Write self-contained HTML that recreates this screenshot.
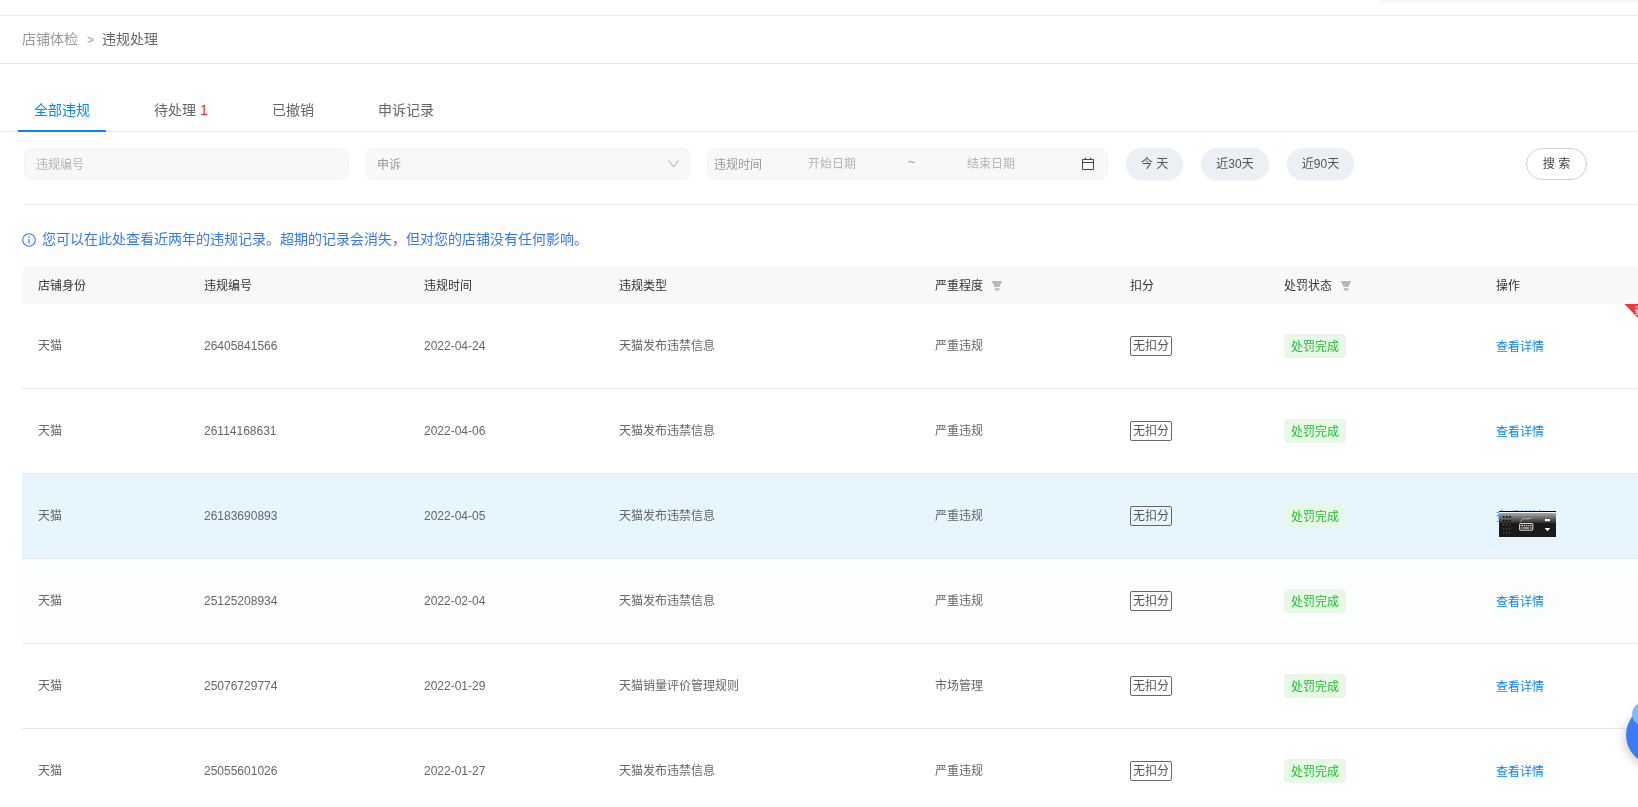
<!DOCTYPE html>
<html lang="zh-CN">
<head>
<meta charset="utf-8">
<title>违规处理</title>
<style>
*{box-sizing:border-box;margin:0;padding:0}
html,body{width:1638px;height:807px;overflow:hidden;background:#fff}
body{position:relative;font-family:"Liberation Sans","Noto Sans CJK SC",sans-serif;font-size:12px;color:#666;-webkit-font-smoothing:antialiased;will-change:transform}
.abs{position:absolute}
.hl{position:absolute;height:1px;background:#ebebeb}
.t{position:absolute;white-space:nowrap;line-height:20px;height:20px}
/* top */
#topchip{left:1376px;top:-10px;width:300px;height:13px;background:#f7f8fa;border-radius:10px}
/* breadcrumb */
.bc{font-size:14px;top:29px}
/* tabs */
.tab{font-size:14px;top:100px;color:#666}
#tabline{left:18px;top:130px;width:88px;height:2px;background:#0984ff}
/* filters */
.fbox{position:absolute;top:148px;height:32px;background:#f7f8fa;border:1px solid #f2f3f6;border-radius:9px}
.ph{position:absolute;top:6px;line-height:20px;font-size:12px;color:#b3b3b3;white-space:nowrap}
.pill{position:absolute;top:148px;height:32px;border-radius:16px;background:#ebf0f5;box-shadow:0 1px 2px rgba(0,0,0,.04);color:#555;font-size:12px;line-height:32px;text-align:center;white-space:nowrap}
#search{background:#fff;box-shadow:none;border:1px solid #d2d2d2;line-height:30px;color:#444}
/* info */
#info{left:42px;top:229px;font-size:14px;color:#3377ff}
/* table */
#thead{left:22px;top:266px;width:1616px;height:38px;background:#f7f8fa;border-radius:8px 0 0 0}
.th{top:276px;color:#333}
.row{position:absolute;left:22px;width:1616px;height:85px;border-bottom:1px solid #e8e8e8}
.row.sel{background:#e6f5fe}
.c{position:absolute;top:32px;line-height:20px;height:20px;white-space:nowrap;color:#666}
.c1{left:16px}.c2{left:182px}.c3{left:402px}.c4{left:597px}.c5{left:913px}
.tag1{position:absolute;left:1108px;top:32px;width:42px;height:20px;border:1px solid #666;border-radius:2px;line-height:19px;text-align:center;color:#555}
.tag2{position:absolute;left:1262px;top:30px;width:62px;height:24px;border-radius:4px;background:#e7f8e6;line-height:24px;padding-top:1px;text-align:center;color:#22bf30}
.lnk{position:absolute;left:1474px;top:33px;line-height:20px;color:#0984ff;white-space:nowrap}
</style>
</head>
<body>
<div class="abs" id="topchip"></div>
<div class="hl" style="left:0;top:15px;width:1638px"></div>
<div class="t bc" style="left:22px;color:#999">店铺体检</div>
<div class="t bc" style="left:87px;top:30px;color:#999;font-size:12px">&gt;</div>
<div class="t bc" style="left:102px;color:#666">违规处理</div>
<div class="hl" style="left:0;top:63px;width:1638px;background:#e8e8ec"></div>

<div class="t tab" style="left:34px;color:#0984ff">全部违规</div>
<div class="t tab" style="left:154px">待处理 <span style="color:#f5222d">1</span></div>
<div class="t tab" style="left:272px">已撤销</div>
<div class="t tab" style="left:378px">申诉记录</div>
<div class="hl" style="left:0;top:131px;width:1638px"></div>
<div class="abs" id="tabline"></div>

<div class="fbox" style="left:24px;width:325px"><span class="ph" style="left:11px">违规编号</span></div>
<div class="fbox" style="left:365px;width:326px"><span class="ph" style="left:11px;color:#999">申诉</span>
<svg class="abs" style="left:301px;top:10px" width="14" height="10" viewBox="0 0 14 10"><path d="M1.6 1.5 L6.5 8 L11.4 1.5" fill="none" stroke="#a6a6a6" stroke-width="1"/></svg></div>
<div class="fbox" style="left:707px;width:401px"><span class="ph" style="left:6px;color:#999">违规时间</span><span class="ph" style="left:100px;top:5px">开始日期</span><span class="ph" style="left:200px;top:3px;color:#999">~</span><span class="ph" style="left:259px;top:5px">结束日期</span>
<svg class="abs" style="left:373px;top:8px" width="14" height="14" viewBox="0 0 14 14"><path d="M1.5 2.5h11v10h-11z M1.5 5.5h11 M4.5 0.5v2.5 M9.5 0.5v2.5" fill="none" stroke="#444" stroke-width="1"/></svg></div>
<div class="pill" style="left:1126px;width:57px">今 天</div>
<div class="pill" style="left:1201px;width:68px">近30天</div>
<div class="pill" style="left:1287px;width:67px">近90天</div>
<div class="pill" id="search" style="left:1526px;width:61px">搜 索</div>
<div class="hl" style="left:24px;top:204px;width:1614px"></div>

<svg class="abs" style="left:21px;top:232px" width="16" height="16" viewBox="0 0 16 16"><circle cx="8" cy="8" r="6.3" fill="none" stroke="#3377ff" stroke-width="1.1"/><path d="M8 7v4.2" stroke="#3377ff" stroke-width="1.2"/><circle cx="8" cy="5" r="0.8" fill="#3377ff"/></svg>
<div class="t" id="info">您可以在此处查看近两年的违规记录。超期的记录会消失，但对您的店铺没有任何影响。</div>

<div class="abs" id="thead"></div>
<div class="t th" style="left:38px">店铺身份</div>
<div class="t th" style="left:204px">违规编号</div>
<div class="t th" style="left:424px">违规时间</div>
<div class="t th" style="left:619px">违规类型</div>
<div class="t th" style="left:935px">严重程度</div>
<div class="t th" style="left:1130px">扣分</div>
<div class="t th" style="left:1284px">处罚状态</div>
<div class="t th" style="left:1496px">操作</div>
<svg class="abs" style="left:991px;top:280px" width="12" height="12" viewBox="0 0 12 12"><path d="M0.7 1H11.1L8.4 7H3.8Z M3.8 8.2H8.4V10.6H3.8Z" fill="#b8b8b8"/></svg>
<svg class="abs" style="left:1340px;top:280px" width="12" height="12" viewBox="0 0 12 12"><path d="M0.7 1H11.1L8.4 7H3.8Z M3.8 8.2H8.4V10.6H3.8Z" fill="#b8b8b8"/></svg>

<div class="row" style="top:304px"><span class="c c1">天猫</span><span class="c c2">26405841566</span><span class="c c3">2022-04-24</span><span class="c c4">天猫发布违禁信息</span><span class="c c5">严重违规</span><span class="tag1">无扣分</span><span class="tag2">处罚完成</span><span class="lnk">查看详情</span></div>
<div class="row" style="top:389px"><span class="c c1">天猫</span><span class="c c2">26114168631</span><span class="c c3">2022-04-06</span><span class="c c4">天猫发布违禁信息</span><span class="c c5">严重违规</span><span class="tag1">无扣分</span><span class="tag2">处罚完成</span><span class="lnk">查看详情</span></div>
<div class="row sel" style="top:474px"><span class="c c1">天猫</span><span class="c c2">26183690893</span><span class="c c3">2022-04-05</span><span class="c c4">天猫发布违禁信息</span><span class="c c5">严重违规</span><span class="tag1">无扣分</span><span class="tag2">处罚完成</span><span class="lnk">查看详情</span></div>
<div class="row" style="top:559px;background:#fcfefe"><span class="c c1">天猫</span><span class="c c2">25125208934</span><span class="c c3">2022-02-04</span><span class="c c4">天猫发布违禁信息</span><span class="c c5">严重违规</span><span class="tag1">无扣分</span><span class="tag2">处罚完成</span><span class="lnk">查看详情</span></div>
<div class="row" style="top:644px"><span class="c c1">天猫</span><span class="c c2">25076729774</span><span class="c c3">2022-01-29</span><span class="c c4">天猫销量评价管理规则</span><span class="c c5">市场管理</span><span class="tag1">无扣分</span><span class="tag2">处罚完成</span><span class="lnk">查看详情</span></div>
<div class="row" style="top:729px"><span class="c c1">天猫</span><span class="c c2">25055601026</span><span class="c c3">2022-01-27</span><span class="c c4">天猫发布违禁信息</span><span class="c c5">严重违规</span><span class="tag1">无扣分</span><span class="tag2">处罚完成</span><span class="lnk">查看详情</span></div>
<!-- red corner ribbon -->
<svg class="abs" style="left:1620px;top:304px" width="18" height="16" viewBox="0 0 18 16"><path d="M4.3 0H18V14Z" fill="#f23636"/><path d="M15.3 3h2.7 M15 6.2h3 M15.6 8.2l2.4-.4 M15.8 10.4h2.2" stroke="#fff" stroke-width="1.2" fill="none"/></svg>

<!-- IME floating toolbar -->
<div class="abs" id="ime" style="left:1499px;top:511px;width:57px;height:26px;background:#1a1a1a;border-top:1px solid #000;overflow:hidden">
<div class="abs" style="left:0;top:0;width:57px;height:1px;background:#f4f4f4"></div>
<div class="abs" style="left:0;top:1px;width:57px;height:10px;background:linear-gradient(#a9a9a9,#6f6f6f 45%,#2e2e2e)"></div>
<svg class="abs" style="left:0;top:0" width="57" height="25" viewBox="0 0 57 25">
<g fill="#0a0a0a"><rect x="4" y="4" width="1.6" height="1.6"/><rect x="7" y="4" width="1.6" height="1.6"/><rect x="10" y="4" width="1.6" height="1.6"/><rect x="4" y="8" width="1.6" height="1.6"/><rect x="7" y="8" width="1.6" height="1.6"/><rect x="10" y="8" width="1.6" height="1.6"/></g>
<g fill="#4a4a4a"><rect x="4" y="12" width="1.4" height="1.4"/><rect x="7" y="12" width="1.4" height="1.4"/><rect x="10" y="12" width="1.4" height="1.4"/><rect x="4" y="16" width="1.4" height="1.4"/><rect x="7" y="16" width="1.4" height="1.4"/><rect x="10" y="16" width="1.4" height="1.4"/><rect x="4" y="20" width="1.4" height="1.4"/><rect x="7" y="20" width="1.4" height="1.4"/><rect x="10" y="20" width="1.4" height="1.4"/></g>
<path d="M21.5 9.8c1.5-3 3-3.6 5-3.1s4 .2 6-1.2" fill="none" stroke="#bdbdbd" stroke-width="0.9"/>
<rect x="20.6" y="11.5" width="13.2" height="6.7" rx="1.2" fill="#2a2a2a" stroke="#d8d8d8" stroke-width="1.1"/>
<g fill="#e6e6e6"><rect x="22.2" y="13" width="2" height="1.2"/><rect x="25" y="13" width="1.2" height="1.2"/><rect x="27.1" y="13" width="1.2" height="1.2"/><rect x="29.2" y="13" width="1.2" height="1.2"/><rect x="31.1" y="13" width="1.2" height="1.2"/><rect x="22.2" y="15.4" width="1.2" height="1.2"/><rect x="24.3" y="15.4" width="5.8" height="1.2"/><rect x="31.1" y="15.4" width="1.2" height="1.2"/></g>
<rect x="46" y="7" width="5" height="2.2" fill="#fff"/>
<path d="M45.7 16.1h5.6l-2.8 3.2z" fill="#fff"/>
</svg>
</div>

<!-- floating helper bubble -->
<div class="abs" style="left:1626px;top:705px;width:60px;height:60px;border-radius:50%;background:#3b7bf6;box-shadow:-2px 3px 10px rgba(0,0,0,.18)"></div>
<div class="abs" style="left:1632px;top:699px;width:40px;height:30px;border-radius:50%;background:#79bcff"></div>

</body>
</html>
